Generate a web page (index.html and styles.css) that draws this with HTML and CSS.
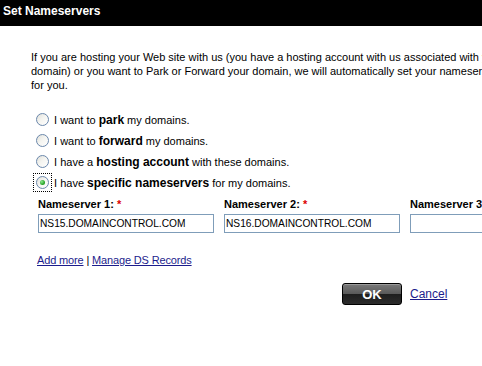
FILE: index.html
```html
<!DOCTYPE html>
<html lang="en">
<head>
    <meta charset="UTF-8">
    <title>Set Nameservers</title>
    <link rel="stylesheet" href="styles.css">
</head>
<body>
    <div class="dialog">
        <div class="dialog-title">Set Nameservers</div>
        <div class="dialog-body">
            <p class="intro">
                If you are hosting your Web site with us (you have a hosting account with us associated with your<br>
                domain) or you want to Park or Forward your domain, we will automatically set your nameservers<br>
                for you.
            </p>
            <ul class="options">
                <li><label><span class="radio-wrap"><input type="radio" name="ns" class="radio"></span> I want to <b>park</b> my domains.</label></li>
                <li><label><span class="radio-wrap"><input type="radio" name="ns" class="radio"></span> I want to <b>forward</b> my domains.</label></li>
                <li><label><span class="radio-wrap"><input type="radio" name="ns" class="radio"></span> I have a <b>hosting account</b> with these domains.</label></li>
                <li><label><span class="radio-wrap focused"><input type="radio" name="ns" class="radio" checked></span> I have <b>specific nameservers</b> for my domains.</label></li>
            </ul>
            <div class="ns-fields">
                <div class="ns-field">
                    <label class="ns-label">Nameserver 1: <span class="req">*</span></label>
                    <input type="text" class="ns-input" value="NS15.DOMAINCONTROL.COM">
                </div>
                <div class="ns-field">
                    <label class="ns-label">Nameserver 2: <span class="req">*</span></label>
                    <input type="text" class="ns-input" value="NS16.DOMAINCONTROL.COM">
                </div>
                <div class="ns-field">
                    <label class="ns-label">Nameserver 3:</label>
                    <input type="text" class="ns-input" value="">
                </div>
            </div>
            <div class="links">
                <a href="#">Add more</a> | <a href="#">Manage DS Records</a>
            </div>
            <div class="actions">
                <button class="ok-button">OK</button>
                <a href="#" class="cancel-link">Cancel</a>
            </div>
        </div>
    </div>
</body>
</html>
```
FILE: styles.css
```css
body {
    margin: 0;
    padding: 0;
    background-color: #fff;
    font-family: "Liberation Sans", Arial, sans-serif;
    font-size: 11px;
    color: #000;
    width: 482px;
    height: 366px;
    overflow: hidden;
}
.dialog {
    width: 640px;
}
.dialog-title {
    background-color: #000;
    color: #fff;
    font-size: 12px;
    font-weight: bold;
    height: 26px;
    line-height: 22px;
    padding-left: 3px;
}
.dialog-body {
    padding-left: 31px;
}
.intro {
    margin: 24px 0 0 0;
    line-height: 14px;
    white-space: nowrap;
}
.options {
    list-style: none;
    margin: 17px 0 0 0;
    padding: 0 0 0 2px;
}
.options li {
    height: 21px;
    display: flex;
    align-items: center;
}
.options label {
    display: flex;
    align-items: center;
    white-space: pre;
}
.options b {
    font-size: 12px;
}
.radio-wrap {
    display: flex;
    align-items: center;
    justify-content: center;
    width: 17px;
    height: 17px;
    margin-right: -1px;
    border: 1px dotted transparent;
}
.radio-wrap.focused {
    border-color: #000;
}
.radio {
    -webkit-appearance: none;
    appearance: none;
    width: 13px;
    height: 13px;
    margin: 0;
    border: 1px solid #6a87ab;
    border-radius: 50%;
    background: linear-gradient(135deg, #e0e0da 0%, #f4f4f0 45%, #fff 100%);
    box-sizing: border-box;
    position: relative;
}
.radio:checked::after {
    content: "";
    position: absolute;
    left: 3px;
    top: 3px;
    width: 5px;
    height: 5px;
    border-radius: 50%;
    background: radial-gradient(circle at 35% 35%, #8ee88e 0%, #2aa52a 60%, #1a8a1a 100%);
}
.ns-fields {
    display: flex;
    gap: 10px;
    margin-top: 4px;
    padding-left: 7px;
}
.ns-field {
    width: 176px;
    flex-shrink: 0;
}
.ns-label {
    display: block;
    font-weight: bold;
    line-height: 14px;
    margin-bottom: 3px;
    white-space: nowrap;
}
.req {
    color: #d00;
}
.ns-input {
    display: block;
    width: 176px;
    height: 19px;
    box-sizing: border-box;
    border: 1px solid #7f9db9;
    padding: 0 1px;
    margin: 0;
    font-family: "Liberation Sans", Arial, sans-serif;
    font-size: 10.2px;
    color: #000;
    outline: none;
}
.links {
    margin-top: 20px;
    padding-left: 6px;
    line-height: 14px;
    letter-spacing: -0.15px;
}
.links a,
.cancel-link {
    color: #1c1c8c;
    text-decoration: underline;
}
.actions {
    display: flex;
    align-items: center;
    margin-top: 16px;
    padding-left: 311px;
}
.ok-button {
    width: 60px;
    height: 22px;
    border: 1px solid #000;
    border-radius: 3px;
    background: linear-gradient(to bottom, #7a7a7a 0%, #5a5a5a 48%, #1e1e1e 52%, #2c2c2c 100%);
    box-shadow: inset 0 1px 0 rgba(255, 255, 255, 0.25);
    color: #fff;
    font-family: "Liberation Sans", Arial, sans-serif;
    font-size: 13px;
    font-weight: bold;
    padding: 0;
    cursor: pointer;
}
.cancel-link {
    margin-left: 8px;
    font-size: 12px;
    letter-spacing: 0;
}
```
